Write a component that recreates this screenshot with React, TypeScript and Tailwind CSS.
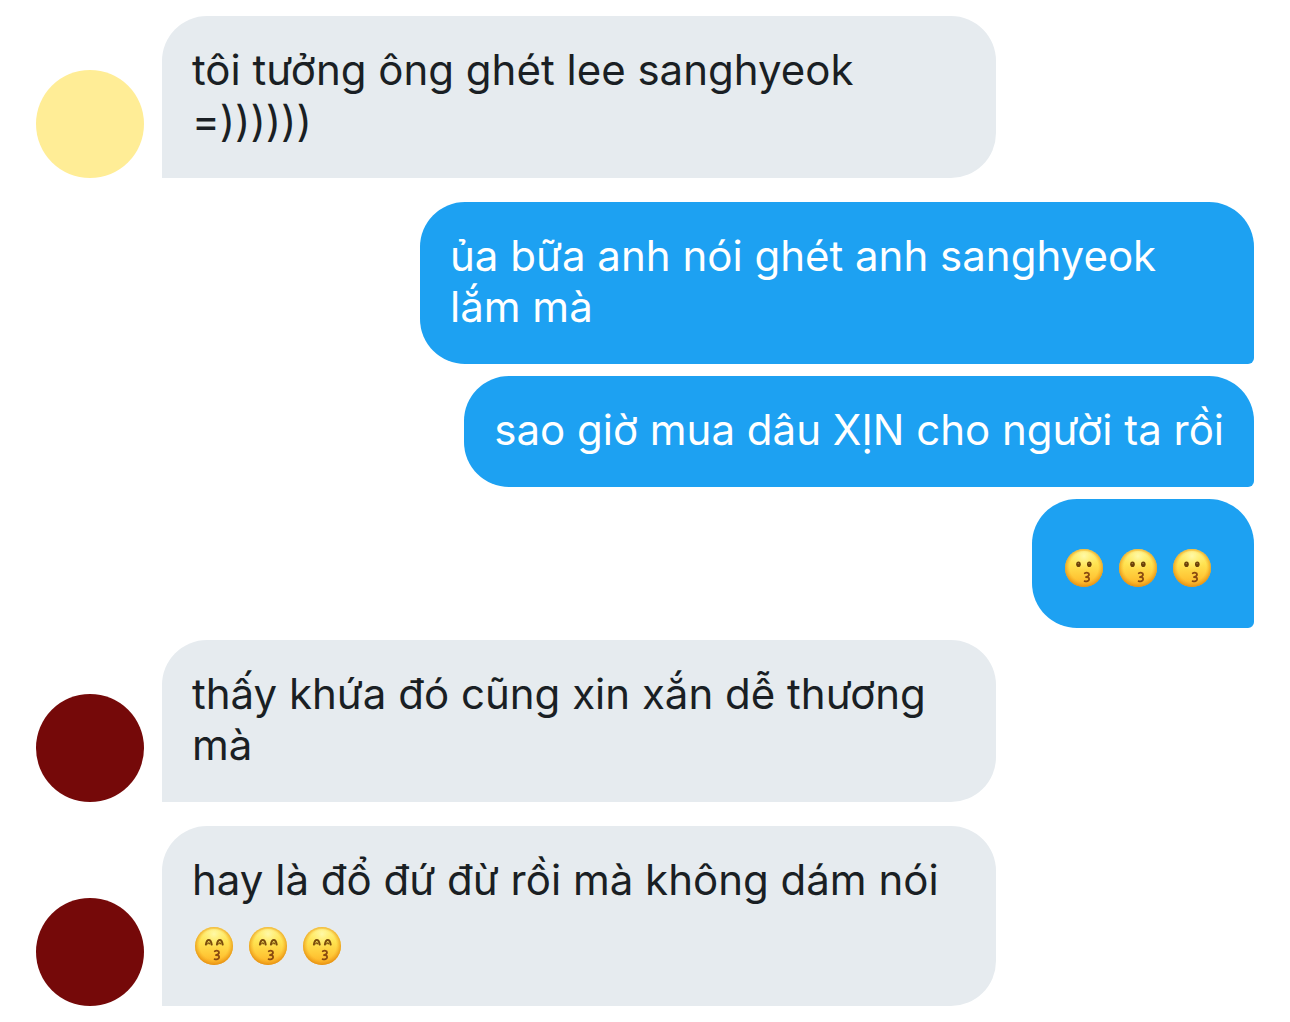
type EmojiKind = "kissing" | "kissingSmile";

interface Message {
  id: number;
  from: "me" | "them";
  text?: string;
  emojis?: EmojiKind[];
  avatarColor?: string;
  spacing?: string;
}

const messages: Message[] = [
  {
    id: 1,
    from: "them",
    text: "tôi tưởng ông ghét lee sanghyeok =))))))",
    avatarColor: "bg-[#ffed96]",
  },
  {
    id: 2,
    from: "me",
    text: "ủa bữa anh nói ghét anh sanghyeok lắm mà",
    spacing: "mt-6",
  },
  {
    id: 3,
    from: "me",
    text: "sao giờ mua dâu XỊN cho người ta rồi",
    spacing: "mt-3",
  },
  {
    id: 4,
    from: "me",
    emojis: ["kissing", "kissing", "kissing"],
    spacing: "mt-3",
  },
  {
    id: 5,
    from: "them",
    text: "thấy khứa đó cũng xin xắn dễ thương mà",
    avatarColor: "bg-[#750909]",
    spacing: "mt-3",
  },
  {
    id: 6,
    from: "them",
    text: "hay là đổ đứ đừ rồi mà không dám nói",
    emojis: ["kissingSmile", "kissingSmile", "kissingSmile"],
    avatarColor: "bg-[#750909]",
    spacing: "mt-6",
  },
];

function EmojiGradients() {
  return (
    <svg className="absolute h-0 w-0" aria-hidden="true">
      <defs>
        <linearGradient id="face" x1="0" y1="0" x2="0" y2="1">
          <stop offset="0" stopColor="#fff27a" />
          <stop offset="0.4" stopColor="#ffe250" />
          <stop offset="0.75" stopColor="#ffc736" />
          <stop offset="1" stopColor="#fdb024" />
        </linearGradient>
        <radialGradient id="edge" cx="0.5" cy="0.48" r="0.52">
          <stop offset="0.72" stopColor="#f5a31c" stopOpacity="0" />
          <stop offset="1" stopColor="#e08a10" stopOpacity="0.85" />
        </radialGradient>
        <radialGradient id="shine" cx="0.5" cy="0.15" r="0.42">
          <stop offset="0" stopColor="#fffcb8" stopOpacity="0.8" />
          <stop offset="1" stopColor="#fff27a" stopOpacity="0" />
        </radialGradient>
      </defs>
    </svg>
  );
}

function Emoji({ kind }: { kind: EmojiKind }) {
  return (
    <svg
      viewBox="0 0 38 38"
      className="h-[38px] w-[38px] shrink-0"
      role="img"
      aria-label={kind === "kissing" ? "😗" : "😙"}
    >
      <circle cx="19" cy="19" r="19" fill="url(#face)" />
      <circle cx="19" cy="19" r="19" fill="url(#edge)" />
      <circle cx="19" cy="19" r="17" fill="url(#shine)" />
      {kind === "kissing" ? (
        <g fill="#6b4108">
          <ellipse cx="13.5" cy="15.2" rx="2.3" ry="2.8" />
          <ellipse cx="24.3" cy="15.2" rx="2.3" ry="2.8" />
          <circle cx="13.3" cy="14.5" r="0.7" fill="#a5793a" />
          <circle cx="24.1" cy="14.5" r="0.7" fill="#a5793a" />
        </g>
      ) : (
        <g
          fill="none"
          stroke="#7a4c0c"
          strokeWidth="2"
          strokeLinecap="round"
          strokeLinejoin="round"
        >
          <path d="M10.9 17.6 C11.4 14.6 12.4 13 13.8 13 S16.2 14.6 16.7 17.6" />
          <path d="M12.7 17 C13 15.6 14.6 15.6 14.9 17" strokeWidth="1.2" />
          <path d="M21.9 17.6 C22.4 14.6 23.4 13 24.8 13 S27.2 14.6 27.7 17.6" />
          <path d="M23.7 17 C24 15.6 25.6 15.6 25.9 17" strokeWidth="1.2" />
        </g>
      )}
      <path
        d="M19.7 24.2 C21.6 23.3 24 23.7 24 25.4 C24 26.9 22.4 27.6 20.9 28 C22.8 28 24.3 28.7 24.1 30.3 C23.9 32 21.6 32.8 19.6 32.2"
        fill="none"
        stroke="#8a4a10"
        strokeWidth="1.8"
        strokeLinecap="round"
        strokeLinejoin="round"
      />
    </svg>
  );
}

function Bubble({ message }: { message: Message }) {
  const mine = message.from === "me";

  return (
    <div
      className={`max-w-[834px] rounded-t-[45px] px-[30px] pt-7 pb-8 text-[42px] leading-[51px] ${
        mine
          ? "rounded-bl-[45px] rounded-br-[6px] bg-[#1da1f2] text-white"
          : "rounded-br-[45px] bg-[#e6ebef] text-[#1a1f24]"
      }`}
    >
      <p>
        {message.text}
        {message.text && message.emojis && " "}
        {message.emojis && (
          <span className="inline-flex h-[69px] items-center gap-4 pl-[3px] pr-[13px] pt-3 align-top">
            {message.emojis.map((kind, i) => (
              <Emoji key={i} kind={kind} />
            ))}
          </span>
        )}
      </p>
    </div>
  );
}

export default function App() {
  return (
    <main className="min-h-screen bg-white px-9 py-4 font-['Inter',sans-serif]">
      <EmojiGradients />
      <ul className="flex flex-col">
        {messages.map((message) => (
          <li
            key={message.id}
            className={`flex items-end gap-[18px] ${message.spacing ?? ""} ${
              message.from === "me" ? "justify-end" : ""
            }`}
          >
            {message.avatarColor && (
              <div
                className={`h-[108px] w-[108px] shrink-0 rounded-full ${message.avatarColor}`}
              />
            )}
            <Bubble message={message} />
          </li>
        ))}
      </ul>
    </main>
  );
}
